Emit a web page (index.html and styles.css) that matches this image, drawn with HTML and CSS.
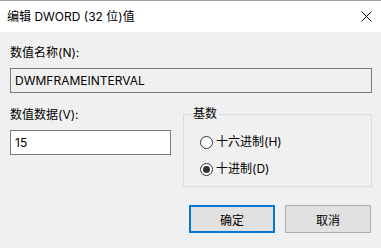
FILE: index.html
```html
<!DOCTYPE html>
<html lang="zh-CN">
<head>
<meta charset="utf-8">
<link rel="stylesheet" href="styles.css">
</head>
<body>
<div class="dialog">
  <div class="titlebar">
    <span class="title">编辑 DWORD (32 位)值</span>
    <span class="close">
      <svg width="11" height="11" viewBox="0 0 11 11"><path d="M0.5 0.5 L10.5 10.5 M10.5 0.5 L0.5 10.5" stroke="#000" stroke-width="1" fill="none"/></svg>
    </span>
  </div>
  <div class="main">
    <div class="label">数值名称(N):</div>
    <div class="field readonly">DWMFRAMEINTERVAL</div>
    <div class="row">
      <div class="left">
        <div class="label label2">数值数据(V):</div>
        <div class="field edit">15</div>
      </div>
      <fieldset class="group">
        <legend>基数</legend>
        <div class="radio"><span class="dot"></span><span>十六进制(H)</span></div>
        <div class="radio second"><span class="dot checked"></span><span>十进制(D)</span></div>
      </fieldset>
    </div>
    <div class="buttons">
      <div class="btn default">确定</div>
      <div class="btn">取消</div>
    </div>
  </div>
</div>
</body>
</html>
```
FILE: styles.css
```css
html, body {
  margin: 0;
  padding: 0;
  background: #f0f0f0;
}
body {
  font-family: Inter, "Noto Sans CJK SC", sans-serif;
  font-size: 12px;
  color: #000;
  width: 381px;
  height: 248px;
  overflow: hidden;
}
.titlebar {
  height: 31px;
  border-top: 1px solid #a0a0a0;
  background: #fff;
  display: flex;
  align-items: center;
  justify-content: space-between;
  padding-left: 7px;
  padding-right: 9px;
}
.title {
  line-height: 16px;
}
.close {
  display: flex;
  width: 11px;
  height: 11px;
}
.main {
  padding: 13px 9px 0 10px;
}
.label {
  line-height: 16px;
}
.field {
  box-sizing: border-box;
  height: 25px;
  margin-top: 7px;
  border: 1px solid #7a7a7a;
  padding-left: 4px;
  line-height: 23px;
}
.readonly {
  background: #f0f0f0;
}
.edit {
  background: #fff;
  width: 161px;
}
.row {
  display: flex;
  margin-top: 13px;
}
.left {
  width: 161px;
}
.label2 {
  padding-top: 1px;
}
.group {
  margin: 0 0 0 12px;
  padding: 12px 0 9px 0;
  border: 1px solid #dcdcdc;
  width: 189px;
  box-sizing: border-box;
  min-width: 0;
}
.group legend {
  padding: 0 2px;
  margin-left: 7px;
  line-height: 16px;
}
.radio {
  display: flex;
  align-items: center;
  line-height: 16px;
  gap: 3px;
  margin-left: 16px;
}
.radio.second {
  margin-top: 11px;
}
.dot {
  box-sizing: border-box;
  width: 13px;
  height: 13px;
  border: 1px solid #333;
  border-radius: 50%;
  background: #fff;
  display: flex;
  align-items: center;
  justify-content: center;
}
.dot.checked::after {
  content: "";
  width: 7px;
  height: 7px;
  border-radius: 50%;
  background: #333;
}
.buttons {
  display: flex;
  justify-content: flex-end;
  gap: 10px;
  margin-top: 18px;
  padding-right: 1px;
}
.btn {
  box-sizing: border-box;
  width: 86px;
  height: 28px;
  border: 1px solid #adadad;
  background: #e1e1e1;
  display: flex;
  align-items: center;
  justify-content: center;
}
.btn.default {
  border: 2px solid #0078d7;
}
```
